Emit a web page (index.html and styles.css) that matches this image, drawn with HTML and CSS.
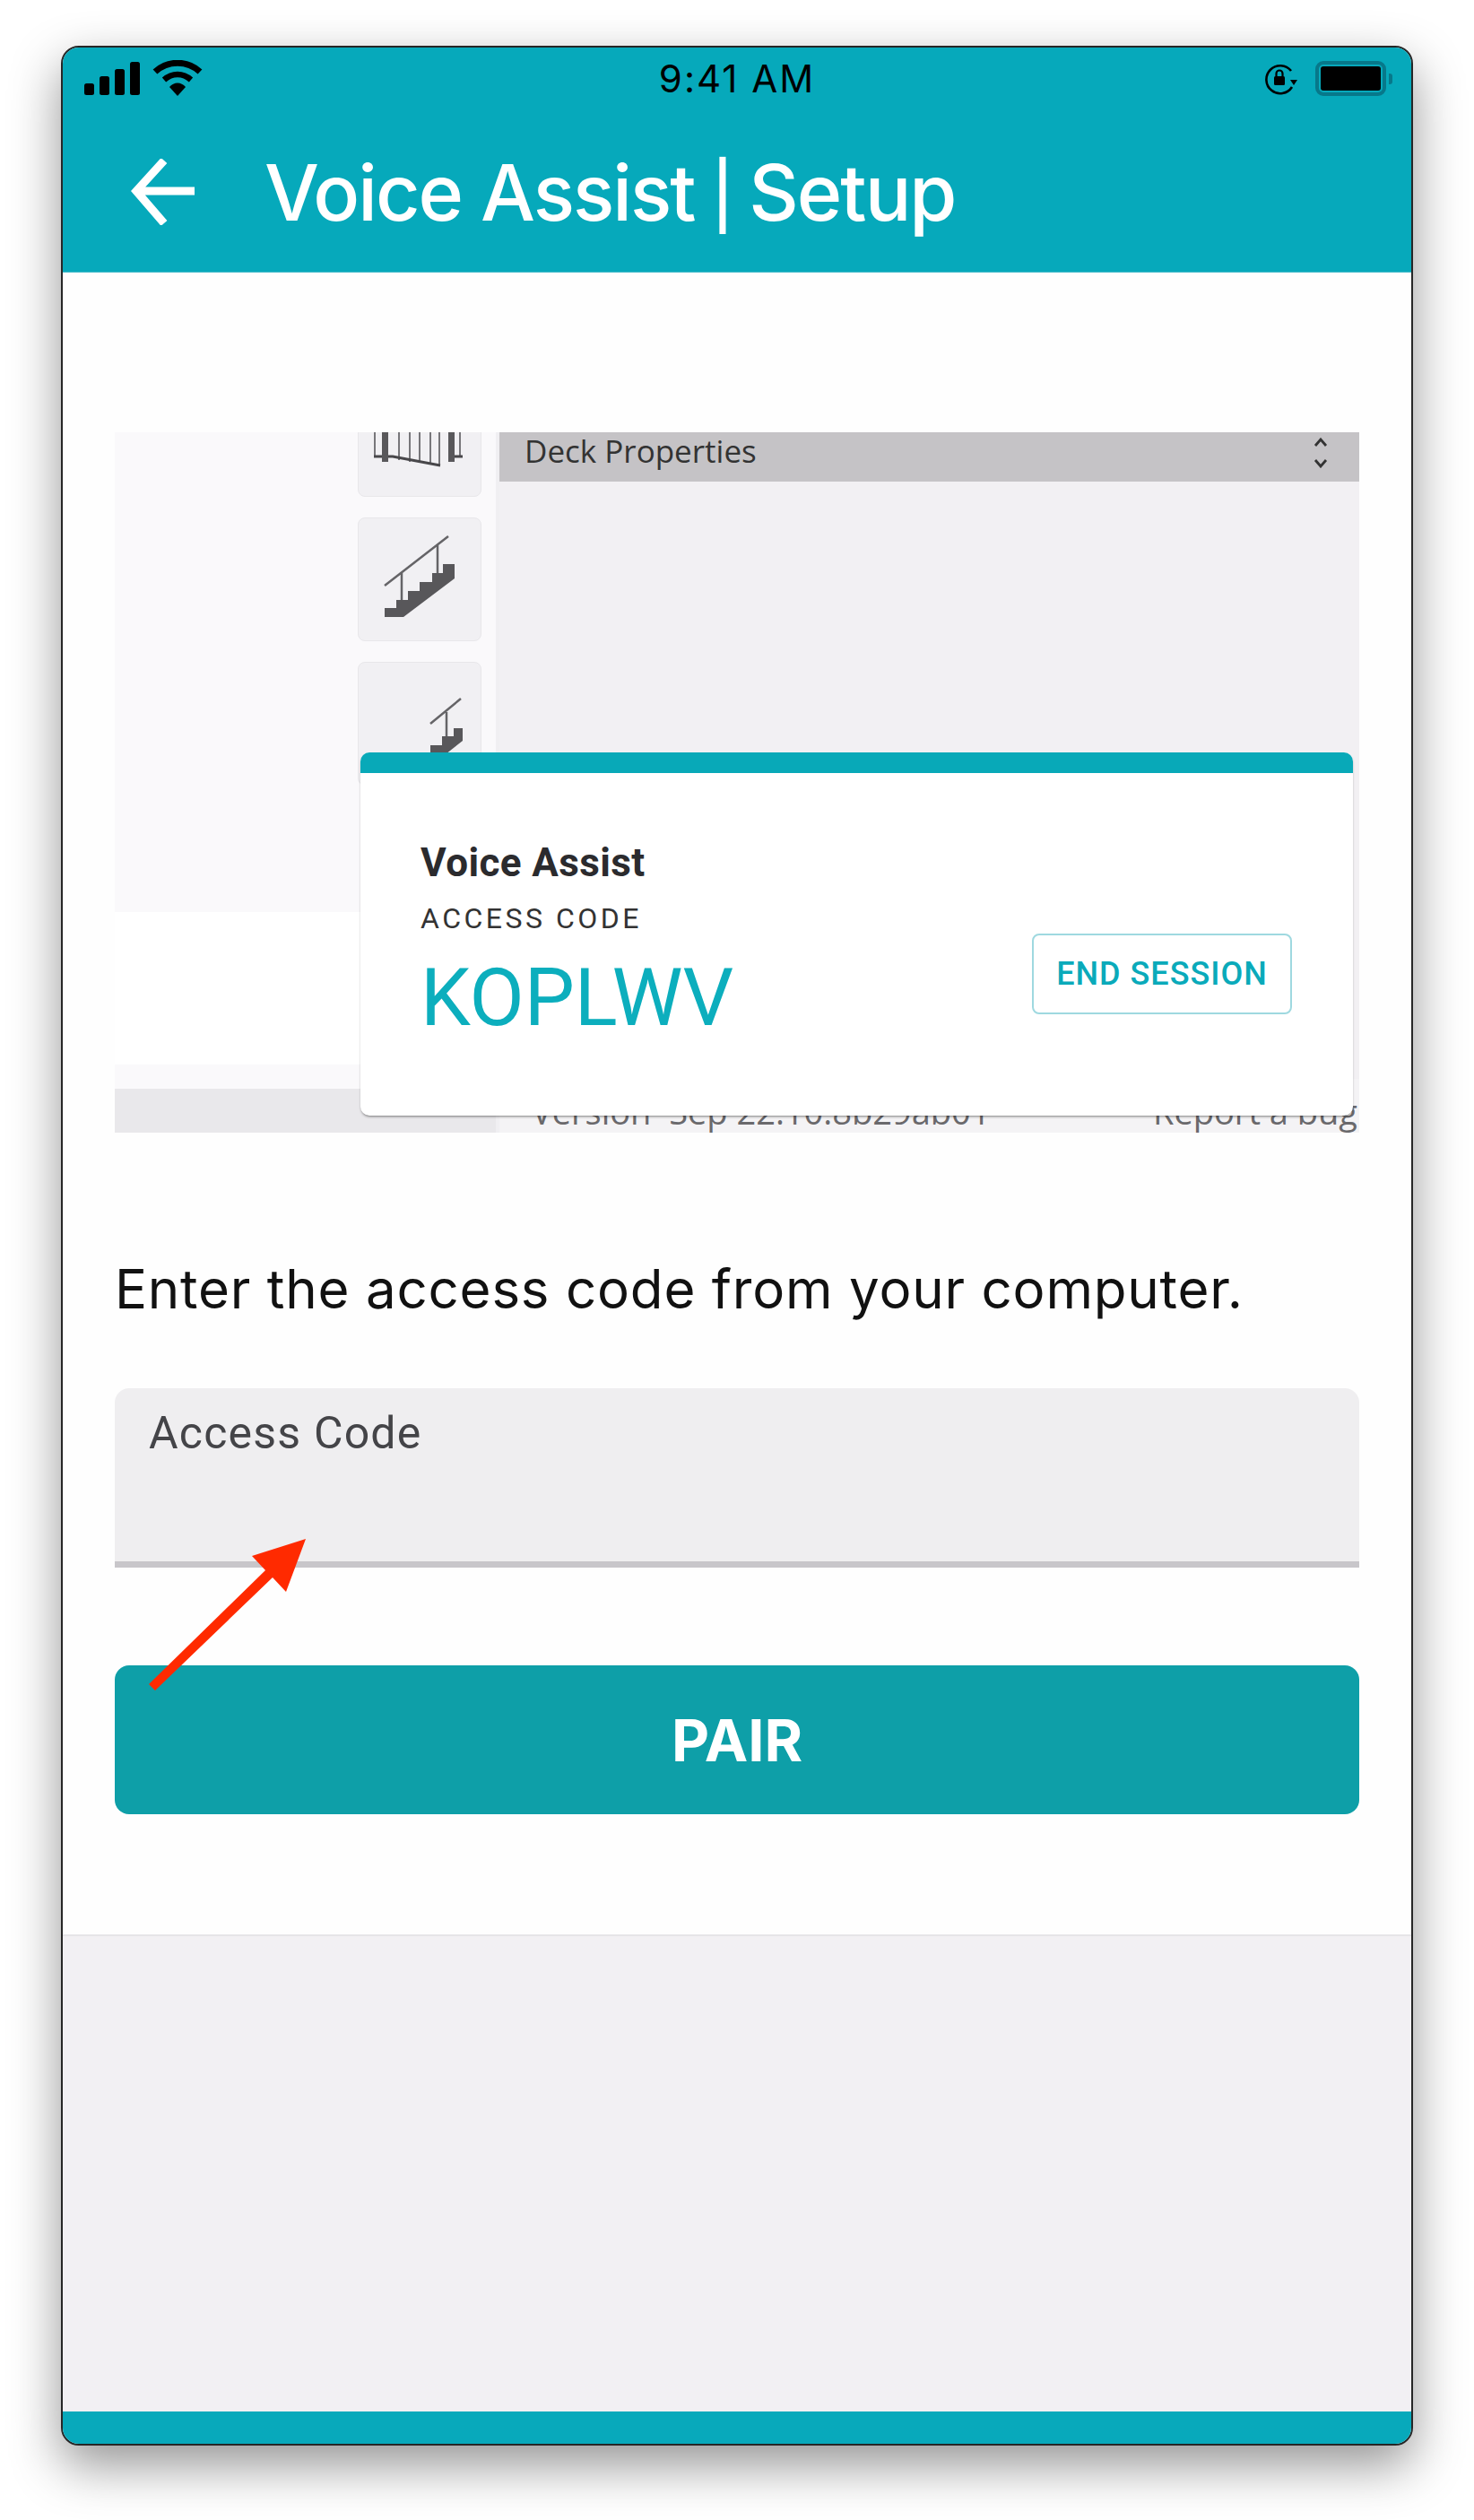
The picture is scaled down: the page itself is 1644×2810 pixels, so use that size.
FILE: index.html
```html
<!DOCTYPE html>
<html lang="en">
<head>
    <meta charset="UTF-8">
    <meta name="viewport" content="width=device-width, initial-scale=1.0">
    <title>Voice Assist | Setup</title>
    <link rel="stylesheet" href="styles.css">
</head>
<body>
    <div class="phone">
        <header class="app-header">
            <div class="status-bar">
                <div class="status-left">
                    <svg class="signal" width="62" height="38" viewBox="0 0 62 38">
                        <rect x="0" y="24" width="11" height="13" rx="2.5"/>
                        <rect x="17" y="16" width="11" height="21" rx="2.5"/>
                        <rect x="34" y="8" width="11" height="29" rx="2.5"/>
                        <rect x="51" y="0" width="11" height="37" rx="2.5"/>
                    </svg>
                    <svg class="wifi" width="56" height="40" viewBox="0 0 56 40">
                        <path d="M3 13 C17 0 39 0 53 13" fill="none" stroke="#000" stroke-width="7"/>
                        <path d="M13 22 C22 14 34 14 43 22" fill="none" stroke="#000" stroke-width="6.5"/>
                        <path d="M19 30 C24 24 32 24 37 30 L28 40 Z"/>
                    </svg>
                </div>
                <div class="status-time">9:41 AM</div>
                <div class="status-right">
                    <svg class="rotation-lock" width="38" height="36" viewBox="0 0 38 36">
                        <path d="M30 9 A15.5 15.5 0 1 0 31 27" fill="none" stroke="#000" stroke-width="2.6"/>
                        <path d="M29 19 L37 19 L33 25 Z"/>
                        <rect x="11" y="15" width="12" height="10" rx="1.5"/>
                        <path d="M13.5 15 V12 A3.5 3.5 0 0 1 20.5 12 V15" fill="none" stroke="#000" stroke-width="2.2"/>
                    </svg>
                    <div class="battery"><div class="battery-level"></div></div>
                    <div class="battery-nub"></div>
                </div>
            </div>
            <div class="title-bar">
                <svg class="back-arrow" width="72" height="74" viewBox="0 0 72 74">
                    <path d="M71 36 H6 M37 2 L6 36 L37 72" fill="none" stroke="#fff" stroke-width="9"/>
                </svg>
                <h1 class="title">Voice Assist <span class="title-pipe">|</span> Setup</h1>
            </div>
        </header>

        <main class="content">
            <div class="shot">
                <div class="shot-left">
                    <div class="tool-stack">
                        <div class="tool-btn">
                            <svg width="138" height="138" viewBox="0 0 138 138">
                                <path d="M19 60 V93 M46 60 V97 M58 60 V99 M69 60 V100 M81 60 V102 M91 60 V104 M114 60 V93" fill="none" stroke="#77767a" stroke-width="2"/>
                                <path d="M18 93 H39 L92 103 M101 93 H117" fill="none" stroke="#48474a" stroke-width="3"/>
                                <rect x="27" y="60" width="7" height="39" fill="#59585b"/>
                                <rect x="101" y="60" width="7" height="39" fill="#59585b"/>
                            </svg>
                        </div>
                        <div class="tool-btn">
                            <svg width="138" height="138" viewBox="0 0 138 138">
                                <path d="M30 76 L101 21 M49 61 V93 M89 31 V63" fill="none" stroke="#656467" stroke-width="2.5"/>
                                <path d="M30 101 H43 V92 H56 V82 H69 V72 H83 V62 H95 V52 H108 V68 L51 111 H30 Z" fill="#58575a"/>
                            </svg>
                        </div>
                        <div class="tool-btn">
                            <svg width="138" height="138" viewBox="0 0 138 138">
                                <path d="M81 69 L115 41 M99 56 V86" fill="none" stroke="#656467" stroke-width="2.5"/>
                                <path d="M33 101 H81 V93 H94 V83 H107 V74 H117 V88 L98 103 V112 H33 Z" fill="#58575a"/>
                            </svg>
                        </div>
                    </div>
                    <div class="shot-blank"></div>
                    <div class="shot-gap"></div>
                    <div class="shot-foot"></div>
                </div>
                <div class="shot-right">
                    <div class="deck-bar">
                        <span>Deck Properties</span>
                        <svg width="16" height="34" viewBox="0 0 16 34">
                            <path d="M2 9 L8 2 L14 9 M2 25 L8 32 L14 25" fill="none" stroke="#333" stroke-width="2.8"/>
                        </svg>
                    </div>
                    <div class="deck-body"></div>
                    <div class="deck-foot">
                        <span>Version&nbsp; Sep 22.10.8b29ab01</span>
                        <span>Report a bug</span>
                    </div>
                </div>
                <div class="code-card">
                    <div class="code-card-top"></div>
                    <div class="code-card-body">
                        <div class="code-info">
                            <div class="code-name">Voice Assist</div>
                            <div class="code-label">ACCESS CODE</div>
                            <div class="code-value">KOPLWV</div>
                        </div>
                        <button class="end-btn">END SESSION</button>
                    </div>
                </div>
            </div>

            <p class="prompt">Enter the access code from your computer.</p>

            <div class="field">
                <div class="field-label">Access Code</div>
            </div>

            <button class="pair-btn">PAIR</button>
        </main>

        <div class="lower"></div>
        <div class="bottom-bar"></div>

        <svg class="red-arrow" width="190" height="180" viewBox="0 0 190 180">
            <path d="M0 166 L130 39 L115 23 L175 4 L153 63 L138 47 L7 173 Z" fill="#ff2a00"/>
        </svg>
    </div>
</body>
</html>
```

FILE: styles.css
```css
* {
    box-sizing: border-box;
}
body {
    min-height: 2810px;
    margin: 0;
    padding: 51px 0 0 68px;
    background-color: #fff;
    font-family: Roboto, sans-serif;
}
.phone {
    position: relative;
    display: flex;
    flex-direction: column;
    width: 1508px;
    height: 2676px;
    border: 2px solid #262626;
    border-radius: 20px;
    box-shadow: 0 22px 56px rgba(0, 0, 0, 0.42);
    background-color: #f2f0f3;
}

/* header */
.app-header {
    height: 251px;
    background-color: #06a9bb;
    border-radius: 18px 18px 0 0;
    border-bottom: 1px solid #52bfcc;
}
.status-bar {
    display: flex;
    justify-content: space-between;
    align-items: flex-start;
    height: 105px;
    padding: 15px 21px 0 24px;
    position: relative;
}
.status-left {
    display: flex;
    align-items: flex-start;
    gap: 14px;
    padding-top: 1px;
}
.wifi {
    margin-top: -2px;
}
.status-time {
    position: absolute;
    left: 0;
    right: 0;
    top: 9px;
    text-align: center;
    font-family: Inter, sans-serif;
    font-size: 42px;
    letter-spacing: 2px;
    color: #000;
}
.status-right {
    display: flex;
    align-items: center;
}
.rotation-lock {
    margin-right: 19px;
}
.battery {
    width: 79px;
    height: 39px;
    border: 4px solid #07788a;
    border-radius: 9px;
    padding: 2px;
}
.battery-level {
    height: 100%;
    background-color: #000;
    border-radius: 3px;
}
.battery-nub {
    width: 4px;
    height: 12px;
    margin-left: 3px;
    background-color: #07788a;
    border-radius: 0 3px 3px 0;
}
.title-bar {
    display: flex;
    align-items: center;
    height: 146px;
    padding-left: 76px;
}
.back-arrow {
    margin-top: -34px;
}
.title {
    margin: -33px 0 0 77px;
    font-family: Inter, sans-serif;
    font-size: 86px;
    font-weight: 500;
    letter-spacing: -2px;
    color: #fff;
}
.title-pipe {
    margin: 0 -2px;
    font-size: 72px;
    vertical-align: 2px;
}

/* white part */
.content {
    height: 1855px;
    padding: 178px 58px 0 58px;
    background-color: #fefefe;
    border-bottom: 2px solid #e6e5e8;
}
.shot {
    position: relative;
    display: flex;
    height: 781px;
    overflow: hidden;
}
.shot-left {
    display: flex;
    flex-direction: column;
    width: 429px;
    background-color: #faf9fb;
    border-right: 4px solid #f0eff2;
}
.tool-stack {
    display: flex;
    flex-direction: column;
    gap: 23px;
    height: 535px;
    padding-left: 271px;
    overflow: hidden;
}
.tool-btn {
    flex: none;
    width: 138px;
    height: 138px;
    background-color: #f1f0f3;
    border: 1px solid #e8e7ea;
    border-radius: 8px;
}
.tool-btn:first-child {
    margin-top: -66px;
}
.tool-btn svg {
    display: block;
    margin: -1px;
}
.shot-blank {
    height: 170px;
    background-color: #fff;
}
.shot-gap {
    height: 27px;
    background-color: #faf9fb;
}
.shot-foot {
    height: 49px;
    background-color: #e9e8eb;
}
.shot-right {
    flex: 1;
    display: flex;
    flex-direction: column;
    background-color: #f2f0f3;
}
.deck-bar {
    display: flex;
    justify-content: space-between;
    align-items: center;
    height: 55px;
    padding: 0 35px 14px 28px;
    background-color: #c5c3c6;
    font-family: "Open Sans", sans-serif;
    font-size: 35px;
    line-height: 40px;
    color: #333;
}
.deck-bar svg {
    margin-top: 4px;
}
.deck-body {
    flex: 1;
}
.deck-foot {
    display: flex;
    justify-content: space-between;
    align-items: flex-end;
    height: 60px;
    padding: 0 2px 0 36px;
    background-color: #f4f3f5;
    font-family: "Open Sans", sans-serif;
    font-size: 38px;
    line-height: 48px;
    color: #6a696c;
}

/* card on top of the screenshot */
.code-card {
    position: absolute;
    left: 274px;
    top: 357px;
    width: 1107px;
    height: 405px;
    background-color: #fff;
    border-radius: 10px;
    box-shadow: 0 2px 3px -1px rgba(0, 0, 0, 0.5);
    overflow: hidden;
}
.code-card-top {
    height: 23px;
    background-color: #08a9b8;
}
.code-card-body {
    display: flex;
    justify-content: space-between;
    align-items: flex-start;
    padding: 75px 68px 0 67px;
}
.code-name {
    font-size: 44px;
    font-weight: 700;
    letter-spacing: 0.4px;
    line-height: 50px;
    color: #2b2b2e;
}
.code-label {
    margin-top: 17px;
    font-size: 32px;
    letter-spacing: 3.5px;
    line-height: 40px;
    color: #333;
}
.code-value {
    margin-top: 17px;
    font-size: 89px;
    line-height: 104px;
    color: #0caebd;
}
.end-btn {
    width: 290px;
    height: 90px;
    margin-top: 104px;
    padding: 0;
    background-color: #fff;
    border: 2px solid #9fd9e0;
    border-radius: 8px;
    font-family: Roboto, sans-serif;
    font-size: 36px;
    font-weight: 500;
    letter-spacing: 1px;
    color: #0aaaba;
}

/* form */
.prompt {
    margin: 142px 0 0 0;
    height: 64px;
    font-family: Inter, sans-serif;
    font-size: 60px;
    letter-spacing: 0.8px;
    line-height: 64px;
    color: #111;
}
.field {
    height: 200px;
    margin-top: 79px;
    padding: 21px 38px;
    background-color: #efeef0;
    border-bottom: 7px solid #c8c6ca;
    border-radius: 16px 16px 0 0;
}
.field-label {
    font-size: 50px;
    letter-spacing: 1.2px;
    color: #444448;
}
.pair-btn {
    display: block;
    width: 100%;
    height: 166px;
    margin-top: 109px;
    background-color: #0e9fa8;
    border: none;
    border-radius: 16px;
    font-family: Inter, sans-serif;
    font-size: 65px;
    font-weight: 700;
    color: #fff;
}

/* grey bottom */
.lower {
    flex: 1;
    background-color: #f2f0f3;
}
.bottom-bar {
    height: 36px;
    background-color: #08a9bb;
    border-radius: 0 0 18px 18px;
}
.red-arrow {
    position: absolute;
    left: 96px;
    top: 1659px;
}
```
